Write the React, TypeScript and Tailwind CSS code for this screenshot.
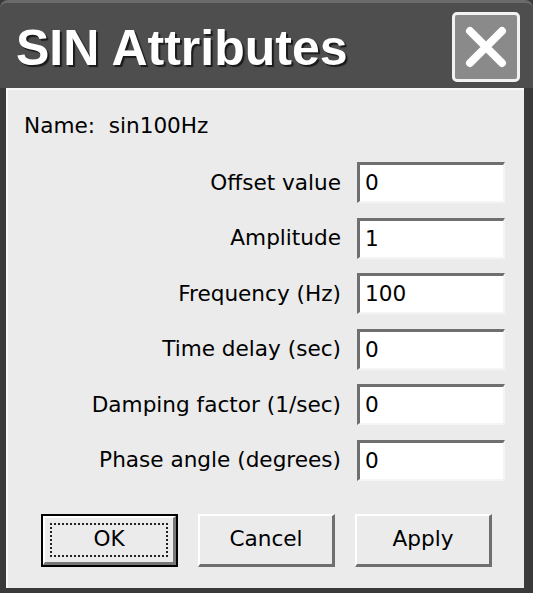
import React from "react";

const rows: [string, string][] = [
  ["Offset value", "0"],
  ["Amplitude", "1"],
  ["Frequency (Hz)", "100"],
  ["Time delay (sec)", "0"],
  ["Damping factor (1/sec)", "0"],
  ["Phase angle (degrees)", "0"],
];

export default function App() {
  return (
    <div
      className="w-[533px] h-[593px] bg-[#3a3a3a] flex flex-col pl-[6px] pr-[9px] pb-[5px] overflow-hidden"
      style={{ fontFamily: '"Liberation Sans", Arial, sans-serif' }}
    >
      {/* Title bar */}
      <div className="h-[88px] -ml-[6px] -mr-[9px] bg-[#4e4e4e] flex items-center pl-[16px] pr-[13px] border-t-[3px] border-[#6a6a6a] rounded-t-[8px]">
        <div
          className="flex-1 text-white font-bold text-[50px] leading-none pt-[4px]"
          style={{ textShadow: "2px 2px 1px #1a1a1a" }}
        >
          SIN Attributes
        </div>
        <div className="w-[68px] h-[70px] mt-[2px] rounded-[5px] border-[3px] border-[#f2f2f2] bg-[#8a8a8a] flex items-center justify-center">
          <svg width="46" height="46" viewBox="0 0 46 46">
            <path d="M7 7 L39 39 M39 7 L7 39" stroke="#ffffff" strokeWidth="8" strokeLinecap="round" />
          </svg>
        </div>
      </div>

      {/* Client area */}
      <div
        className="flex-1 bg-[#ebebeb] flex flex-col text-[21.6px] text-black border-l-2 border-t-2 border-[#f8f8f8]"
        style={{ fontFamily: '"DejaVu Sans", Tahoma, sans-serif' }}
      >
        <div className="mt-[24px] ml-[16px] leading-[24px]">
          Name:&nbsp;&nbsp;sin100Hz
        </div>
        <div className="mt-[24px] flex flex-col gap-[14.5px] pr-[19px]">
          {rows.map(([label, value]) => (
            <div key={label} className="flex items-center justify-end gap-[16px]">
              <span className="leading-[24px]">{label}</span>
              <div className="w-[148px] h-[41px] bg-white border-t-[3px] border-l-[3px] border-[#6f6f6f] border-b-2 border-r-2 border-b-[#f4f4f4] border-r-[#f4f4f4] flex items-center pl-[5px] leading-[24px]">
                {value}
              </div>
            </div>
          ))}
        </div>
        <div className="mt-[33px] flex gap-[20px] pl-[33px]">
          <div className="w-[137px] h-[53px] border-2 border-black">
            <div className="w-full h-full border-t-2 border-l-2 border-white border-b-[3px] border-r-[3px] border-b-[#777] border-r-[#777] bg-[#ebebeb] p-[5px]">
              <div className="w-full h-full border-2 border-dotted border-[#222] flex items-center justify-center">
                OK
              </div>
            </div>
          </div>
          {["Cancel", "Apply"].map((b) => (
            <div
              key={b}
              className="w-[137px] h-[53px] border-t-2 border-l-2 border-white border-b-[3px] border-r-[3px] border-b-[#6f6f6f] border-r-[#6f6f6f] bg-[#ebebeb] flex items-center justify-center"
            >
              {b}
            </div>
          ))}
        </div>
      </div>
    </div>
  );
}
